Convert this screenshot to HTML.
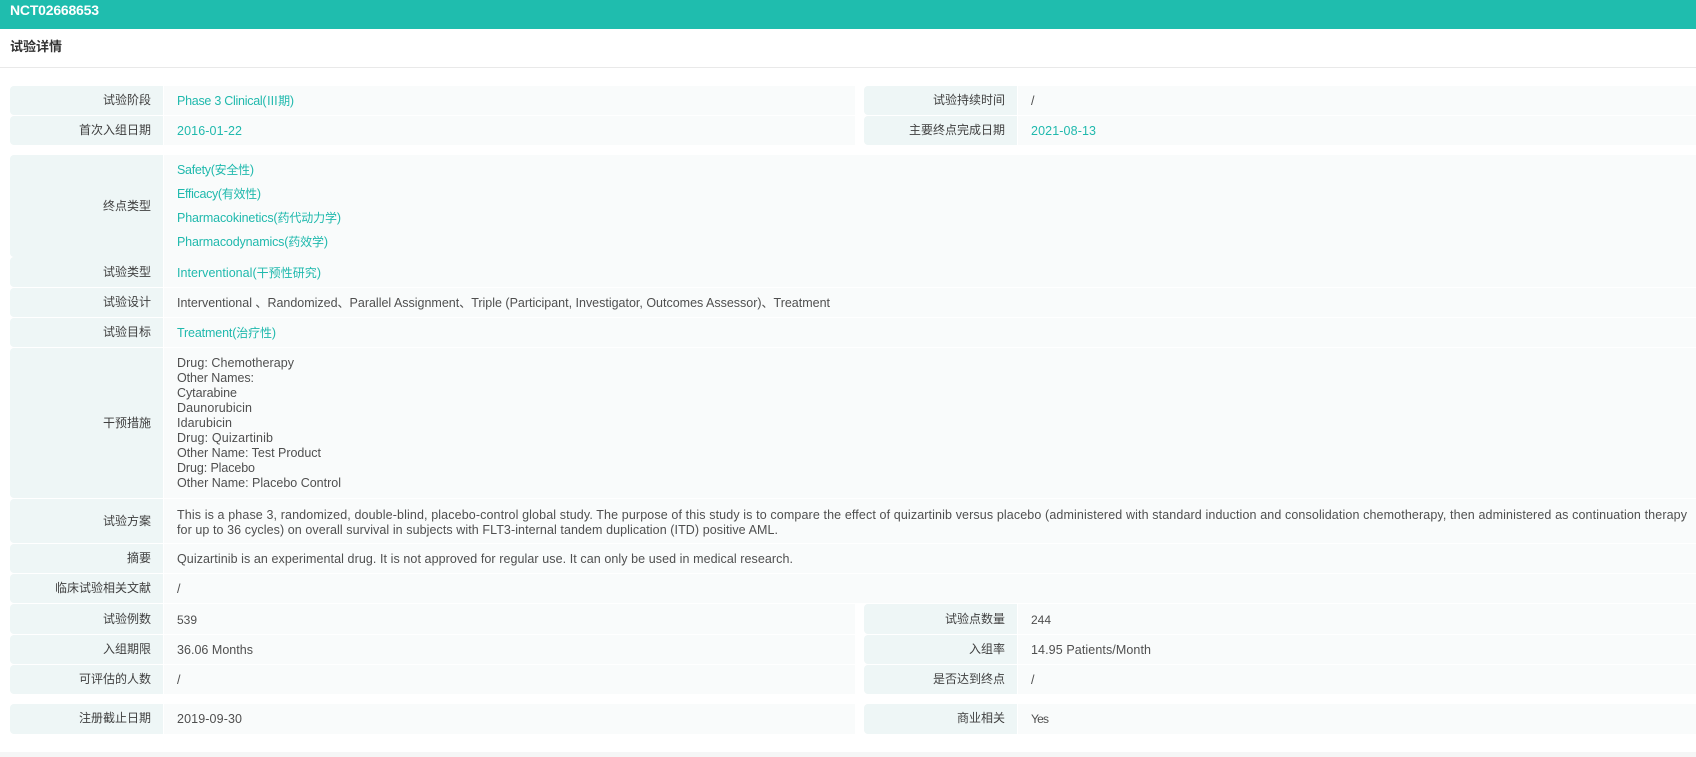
<!DOCTYPE html>
<html lang="zh-CN">
<head>
<meta charset="utf-8">
<title>NCT02668653</title>
<style>
html,body{margin:0;padding:0;background:#fff;width:1696px;height:757px;overflow:hidden}
.b{position:absolute}
.l,.r{position:absolute;background:#eef6f6;border-radius:4px 0 0 4px}
.l{left:10px;width:153px}
.r{left:864px;width:153px}
.v{position:absolute;left:164px;width:691px;background:#f9fbfb}
.w{position:absolute;left:1018px;width:678px;background:#f9fbfb}
.f{position:absolute;left:164px;width:1532px;background:#f9fbfb}
svg{position:absolute;left:0;top:0}
text{font-family:"Liberation Sans","Noto Sans CJK SC",sans-serif;font-size:12.5px;fill:#4f4f4f}
tspan{font-size:12px}
.k{fill:#3f3f3f;text-anchor:end;font-size:12px}
.t{fill:#20b9ad}
.s{font-size:12px}
</style>
</head>
<body>
<div class="b" style="left:0;top:0;width:1696px;height:29px;background:#1fbdae"></div>
<div class="b" style="left:0;top:67px;width:1696px;height:1px;background:#e9e9e9"></div>
<div class="b" style="left:0;top:752px;width:1696px;height:5px;background:#f5f6f6"></div>

<div class="l" style="top:86px;height:29px"></div><div class="v" style="top:86px;height:29px"></div>
<div class="r" style="top:86px;height:29px"></div><div class="w" style="top:86px;height:29px"></div>
<div class="l" style="top:116px;height:29px"></div><div class="v" style="top:116px;height:29px"></div>
<div class="r" style="top:116px;height:29px"></div><div class="w" style="top:116px;height:29px"></div>

<div class="l" style="top:155px;height:102px"></div><div class="f" style="top:155px;height:102px"></div>
<div class="l" style="top:257px;height:30px"></div><div class="f" style="top:257px;height:30px"></div>
<div class="l" style="top:288px;height:29px"></div><div class="f" style="top:288px;height:29px"></div>
<div class="l" style="top:318px;height:29px"></div><div class="f" style="top:318px;height:29px"></div>
<div class="l" style="top:348px;height:150px"></div><div class="f" style="top:348px;height:150px"></div>
<div class="l" style="top:499px;height:44px"></div><div class="f" style="top:499px;height:44px"></div>
<div class="l" style="top:544px;height:29px"></div><div class="f" style="top:544px;height:29px"></div>
<div class="l" style="top:574px;height:29px"></div><div class="f" style="top:574px;height:29px"></div>

<div class="l" style="top:604px;height:30px"></div><div class="v" style="top:604px;height:30px"></div>
<div class="r" style="top:604px;height:30px"></div><div class="w" style="top:604px;height:30px"></div>
<div class="l" style="top:635px;height:29px"></div><div class="v" style="top:635px;height:29px"></div>
<div class="r" style="top:635px;height:29px"></div><div class="w" style="top:635px;height:29px"></div>
<div class="l" style="top:665px;height:29px"></div><div class="v" style="top:665px;height:29px"></div>
<div class="r" style="top:665px;height:29px"></div><div class="w" style="top:665px;height:29px"></div>
<div class="l" style="top:704px;height:30px"></div><div class="v" style="top:704px;height:30px"></div>
<div class="r" style="top:704px;height:30px"></div><div class="w" style="top:704px;height:30px"></div>

<svg width="1696" height="757" viewBox="0 0 1696 757" xmlns="http://www.w3.org/2000/svg">
<text x="10" y="15" textLength="89" style="font-size:14px;font-weight:bold;fill:#fff">NCT02668653</text>
<text x="10" y="51" style="font-size:13px;font-weight:bold;fill:#333">试验详情</text>

<text class="k" x="151" y="104">试验阶段</text>
<text class="t" x="177" y="105" textLength="117">Phase 3 Clinical(<tspan>Ⅲ期</tspan>)</text>
<text class="k" x="1005" y="104">试验持续时间</text>
<text x="1031" y="105">/</text>
<text class="k" x="151" y="134">首次入组日期</text>
<text class="t" x="177" y="135" textLength="65">2016-01-22</text>
<text class="k" x="1005" y="134">主要终点完成日期</text>
<text class="t" x="1031" y="135" textLength="65">2021-08-13</text>

<text class="k" x="151" y="210">终点类型</text>
<text class="t" x="177" y="174" textLength="77">Safety(<tspan>安全性</tspan>)</text>
<text class="t" x="177" y="198" textLength="84">Efficacy(<tspan>有效性</tspan>)</text>
<text class="t" x="177" y="222" textLength="164">Pharmacokinetics(<tspan>药代动力学</tspan>)</text>
<text class="t" x="177" y="246" textLength="151">Pharmacodynamics(<tspan>药效学</tspan>)</text>

<text class="k" x="151" y="276">试验类型</text>
<text class="t" x="177" y="277" textLength="144">Interventional(<tspan>干预性研究</tspan>)</text>
<text class="k" x="151" y="306">试验设计</text>
<text x="177" y="307" textLength="653">Interventional <tspan>、</tspan>Randomized<tspan>、</tspan>Parallel Assignment<tspan>、</tspan>Triple (Participant, Investigator, Outcomes Assessor)<tspan>、</tspan>Treatment</text>
<text class="k" x="151" y="336">试验目标</text>
<text class="t" x="177" y="337" textLength="99">Treatment(<tspan>治疗性</tspan>)</text>

<text class="k" x="151" y="427">干预措施</text>
<text x="177" y="367" textLength="117">Drug: Chemotherapy</text>
<text x="177" y="382" textLength="77">Other Names:</text>
<text x="177" y="397" textLength="60">Cytarabine</text>
<text x="177" y="412" textLength="75">Daunorubicin</text>
<text x="177" y="427" textLength="55">Idarubicin</text>
<text x="177" y="442" textLength="96">Drug: Quizartinib</text>
<text x="177" y="457" textLength="144">Other Name: Test Product</text>
<text x="177" y="472" textLength="78">Drug: Placebo</text>
<text x="177" y="487" textLength="164">Other Name: Placebo Control</text>

<text class="k" x="151" y="525">试验方案</text>
<text x="177" y="519" textLength="1510">This is a phase 3, randomized, double-blind, placebo-control global study. The purpose of this study is to compare the effect of quizartinib versus placebo (administered with standard induction and consolidation chemotherapy, then administered as continuation therapy</text>
<text x="177" y="534" textLength="601">for up to 36 cycles) on overall survival in subjects with FLT3-internal tandem duplication (ITD) positive AML.</text>

<text class="k" x="151" y="562">摘要</text>
<text x="177" y="563" textLength="616">Quizartinib is an experimental drug. It is not approved for regular use. It can only be used in medical research.</text>
<text class="k" x="151" y="592">临床试验相关文献</text>
<text x="177" y="593">/</text>

<text class="k" x="151" y="623">试验例数</text>
<text class="s" x="177" y="624" textLength="20">539</text>
<text class="k" x="1005" y="623">试验点数量</text>
<text class="s" x="1031" y="624" textLength="20">244</text>
<text class="k" x="151" y="653">入组期限</text>
<text x="177" y="654" textLength="76">36.06 Months</text>
<text class="k" x="1005" y="653">入组率</text>
<text x="1031" y="654" textLength="120">14.95 Patients/Month</text>
<text class="k" x="151" y="683">可评估的人数</text>
<text x="177" y="684">/</text>
<text class="k" x="1005" y="683">是否达到终点</text>
<text x="1031" y="684">/</text>
<text class="k" x="151" y="722">注册截止日期</text>
<text x="177" y="723" textLength="65">2019-09-30</text>
<text class="k" x="1005" y="722">商业相关</text>
<text class="s" x="1031" y="723" textLength="18">Yes</text>
</svg>
</body>
</html>
